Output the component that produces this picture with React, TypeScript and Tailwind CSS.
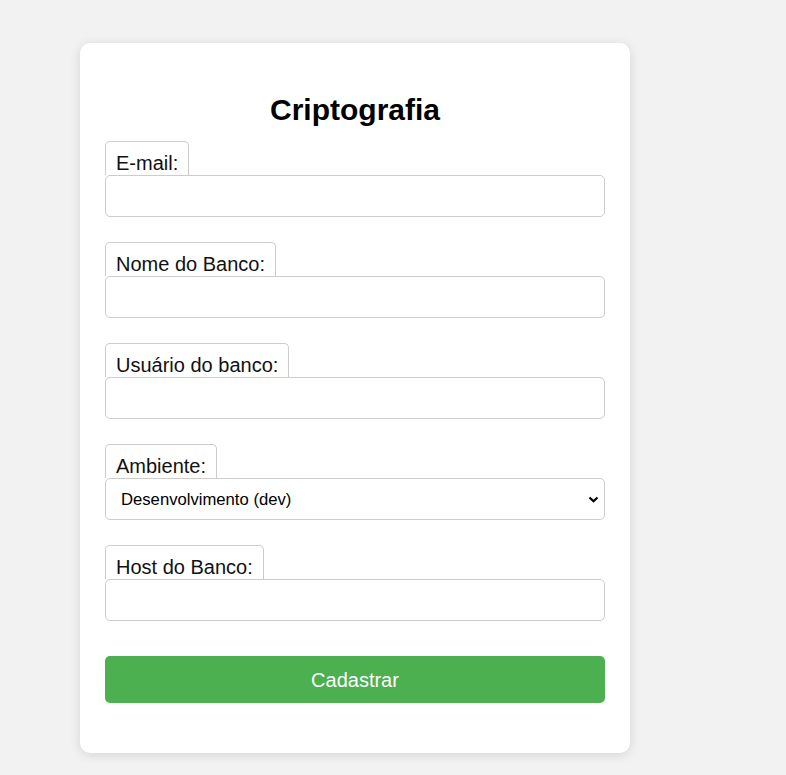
import { useState } from 'react'

const Field = ({ label, children }: { label: string; children: React.ReactNode }) => (
  <div className="mb-[25px] flex flex-col">
    <label className="h-[34px] w-fit rounded-t-[5px] border border-b-0 border-[#cccccc] px-[10px] pt-[10px] text-[20px] leading-[23px] text-[#111]">
      {label}
    </label>
    {children}
  </div>
)

export default function App() {
  const [env, setEnv] = useState('dev')

  return (
    <div className="min-h-screen bg-[#f2f2f2] pt-[43px] pl-[80px] font-['Liberation_Sans',Arial,sans-serif]">
      <div className="w-[550px] rounded-[10px] bg-white p-[25px] shadow-[0_2px_12px_rgba(0,0,0,0.12)]">
        <h2 className="mt-[25px] mb-[14px] text-center text-[30px] font-bold leading-[34px] text-black">
          Criptografia
        </h2>

        <Field label="E-mail:">
          <input type="email" className="h-[42px] w-full rounded-[5px] border border-[#cccccc] bg-white px-[12px] text-[17px] outline-none" />
        </Field>

        <Field label="Nome do Banco:">
          <input type="text" className="h-[42px] w-full rounded-[5px] border border-[#cccccc] bg-white px-[12px] text-[17px] outline-none" />
        </Field>

        <Field label="Usuário do banco:">
          <input type="text" className="h-[42px] w-full rounded-[5px] border border-[#cccccc] bg-white px-[12px] text-[17px] outline-none" />
        </Field>

        <Field label="Ambiente:">
          <div className="relative">
            <select
              value={env}
              onChange={(e) => setEnv(e.target.value)}
              className="h-[42px] w-full appearance-none rounded-[5px] border border-[#cccccc] bg-white pl-[15px] text-[16.67px] text-black outline-none"
            >
              <option value="dev">Desenvolvimento (dev)</option>
              <option value="hml">Homologação (hml)</option>
              <option value="prd">Produção (prd)</option>
            </select>
            <svg className="pointer-events-none absolute top-[18px] right-[6px]" width="11" height="7" viewBox="0 0 11 7">
              <path d="M1.5 1.5 L5.5 5.2 L9.5 1.5" fill="none" stroke="#000" strokeWidth="2.2" />
            </svg>
          </div>
        </Field>

        <Field label="Host do Banco:">
          <input type="text" className="h-[42px] w-full rounded-[5px] border border-[#cccccc] bg-white px-[12px] text-[17px] outline-none" />
        </Field>

        <button className="mt-[10px] mb-[25px] h-[47px] w-full rounded-[5px] bg-[#4caf50] text-[20px] text-white">
          Cadastrar
        </button>
      </div>
    </div>
  )
}
